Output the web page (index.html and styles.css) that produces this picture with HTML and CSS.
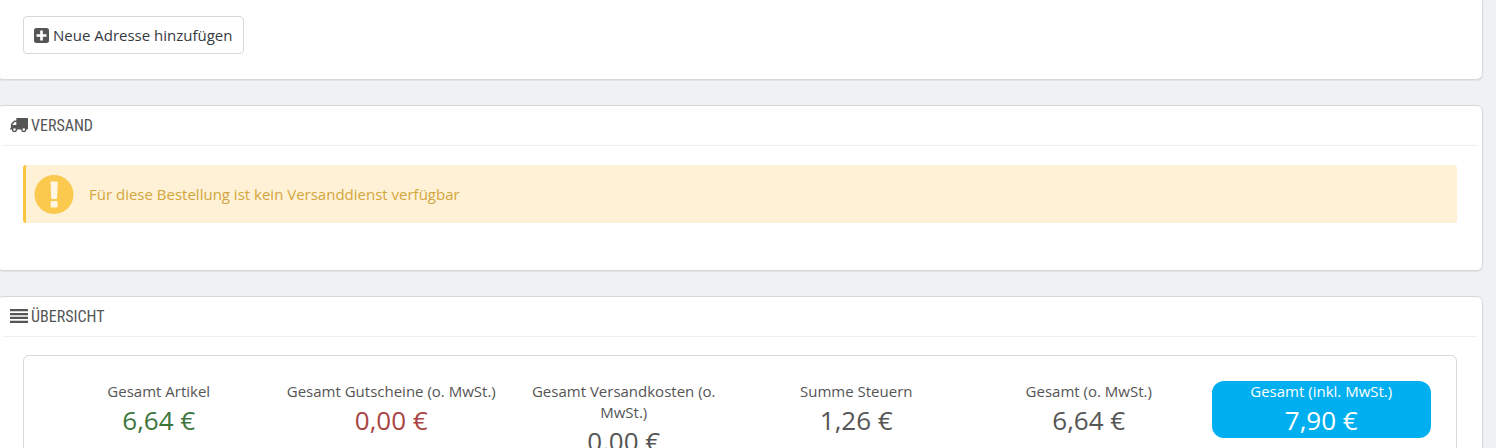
FILE: index.html
```html
<!DOCTYPE html>
<html lang="de">
<head>
<meta charset="utf-8">
<meta name="viewport" content="width=device-width, initial-scale=1">
<title>Bestellung</title>
<link rel="stylesheet" href="styles.css">
</head>
<body>
<main class="page">
  <section class="panel panel-address">
    <div class="panel-body">
      <button type="button" class="btn">
        <svg class="icon-plus" viewBox="0 0 15 15" aria-hidden="true"><path fill="currentColor" fill-rule="evenodd" d="M2.500 0h10A2.500 2.500 0 0 1 15 2.500v10a2.500 2.500 0 0 1-2.500 2.500h-10A2.500 2.500 0 0 1 0 12.500v-10A2.500 2.500 0 0 1 2.500 0zM6.200 2.500v3.700H2.500v2.600h3.700v3.700h2.600V8.800h3.700V6.200H8.800V2.500z"/></svg>
        <span>Neue Adresse hinzufügen</span>
      </button>
    </div>
  </section>

  <section class="panel panel-shipping">
    <h2 class="panel-heading">
      <svg class="icon-heading" viewBox="0 0 18 16" aria-hidden="true"><path fill="currentColor" fill-rule="evenodd" d="M7 1h10.300q.7 0 .7.700V11.500q0 1-1 1h-.6a2.600 2.600 0 0 1-5.200 0H7.100a2.600 2.600 0 0 1-5.200 0H.5q-.5 0-.5-.6.100-.6.900-.9V7.400q0-.6.400-1L3.700 4q.4-.4 1-.4h1.600V1.700Q6.300 1 7 1zM4.800 5 2.400 7.500V8h3.900V5zM4.500 11.200a1.300 1.300 0 1 0 0 2.600 1.300 1.300 0 0 0 0-2.600zM13.800 11.200a1.300 1.300 0 1 0 0 2.600 1.300 1.300 0 0 0 0-2.600z"/></svg>
      <span>VERSAND</span>
    </h2>
    <div class="panel-body">
      <div class="alert" role="alert">
        <svg class="icon-alert" viewBox="0 0 40 40" aria-hidden="true"><circle cx="20" cy="20.500" r="19.500" fill="currentColor"/><path class="icon-alert-mark" d="M16.500 7.500h7.200l-.6 16.600q-.1.800-.9.800h-4.200q-.8 0-.9-.8zM17.500 27h5.200q.8 0 .8.800v5q0 .8-.8.800h-5.200q-.8 0-.8-.8v-5q0-.8.800-.8z"/></svg>
        <span>Für diese Bestellung ist kein Versanddienst verfügbar</span>
      </div>
    </div>
  </section>

  <section class="panel panel-summary">
    <h2 class="panel-heading">
      <svg class="icon-heading" viewBox="0 0 18 16" aria-hidden="true"><path fill="currentColor" d="M0 1h18v2.300H0zM0 4.900h18v2.300H0zM0 8.800h18v2.300H0zM0 12.700h18V15H0z"/></svg>
      <span>ÜBERSICHT</span>
    </h2>
    <div class="panel-body">
      <dl class="totals">
        <div class="total"><dt>Gesamt Artikel</dt><dd class="value-success">6,64 €</dd></div>
        <div class="total"><dt>Gesamt Gutscheine (o. MwSt.)</dt><dd class="value-danger">0,00 €</dd></div>
        <div class="total"><dt>Gesamt Versandkosten (o. MwSt.)</dt><dd>0,00 €</dd></div>
        <div class="total"><dt>Summe Steuern</dt><dd>1,26 €</dd></div>
        <div class="total"><dt>Gesamt (o. MwSt.)</dt><dd>6,64 €</dd></div>
        <div class="total total-final"><dt>Gesamt (inkl. MwSt.)</dt><dd>7,90 €</dd></div>
      </dl>
    </div>
  </section>
</main>
</body>
</html>
```
FILE: styles.css
```css
* {
  box-sizing: border-box;
}

body {
  margin: 0;
  background: #eff1f2;
  color: #555;
  font-family: "Open Sans", "Noto Sans", sans-serif;
  font-size: 15px;
  line-height: 21px;
}

.page {
  display: flex;
  flex-direction: column;
  gap: 25px;
  margin: 0 13px 0 -3px;
}

.panel {
  background: #fff;
  border: 1px solid #d3d8db;
  border-radius: 6px;
  box-shadow: 0 1px 1px rgba(0, 0, 0, 0.06);
}

.panel-address {
  border-top: 0;
  border-radius: 0 0 6px 6px;
}

.panel-heading {
  display: flex;
  align-items: center;
  gap: 3px;
  height: 40px;
  margin: 0 5px;
  padding: 0 7px 1px;
  border-bottom: 1px solid #eee;
  font-family: "Ubuntu Condensed", "Roboto Condensed", Roboto, sans-serif;
  font-size: 16px;
  font-weight: 400;
}

.panel-body {
  padding: 19px 25px 25px;
}

.panel-address .panel-body {
  padding-top: 16px;
}

.panel-shipping .panel-body {
  padding-bottom: 47px;
}

.panel-summary .panel-body {
  padding-top: 18px;
}

.btn {
  display: flex;
  align-items: center;
  gap: 4px;
  height: 38px;
  padding: 0 10px;
  background: #fff;
  border: 1px solid #d6d9db;
  border-radius: 4px;
  color: #363a41;
  font: inherit;
  cursor: pointer;
}

.icon-plus {
  width: 15px;
  height: 15px;
  color: #555;
}

.icon-heading {
  width: 18px;
  height: 16px;
}

.alert {
  display: flex;
  align-items: center;
  gap: 15px;
  min-height: 58px;
  padding: 0 8px;
  background: #fff1d6;
  border-left: 3px solid #fbc441;
  border-radius: 3px;
  color: #d2a63c;
}

.icon-alert {
  width: 40px;
  height: 40px;
  color: #fcc94f;
}

.icon-alert-mark {
  fill: #fff6e4;
}

.totals {
  display: grid;
  grid-template-columns: repeat(6, 1fr);
  align-items: start;
  gap: 13px;
  margin: 0;
  padding: 25px;
  border: 1px solid #d3d8db;
  border-radius: 6px;
  text-align: center;
}

.total dd {
  margin: 0;
  font-size: 26px;
  line-height: 36px;
}

.total .value-success {
  color: #3c763d;
}

.total .value-danger {
  color: #a94442;
}

.total-final {
  background: #00aff0;
  border-radius: 12px;
  color: #fff;
}
```
